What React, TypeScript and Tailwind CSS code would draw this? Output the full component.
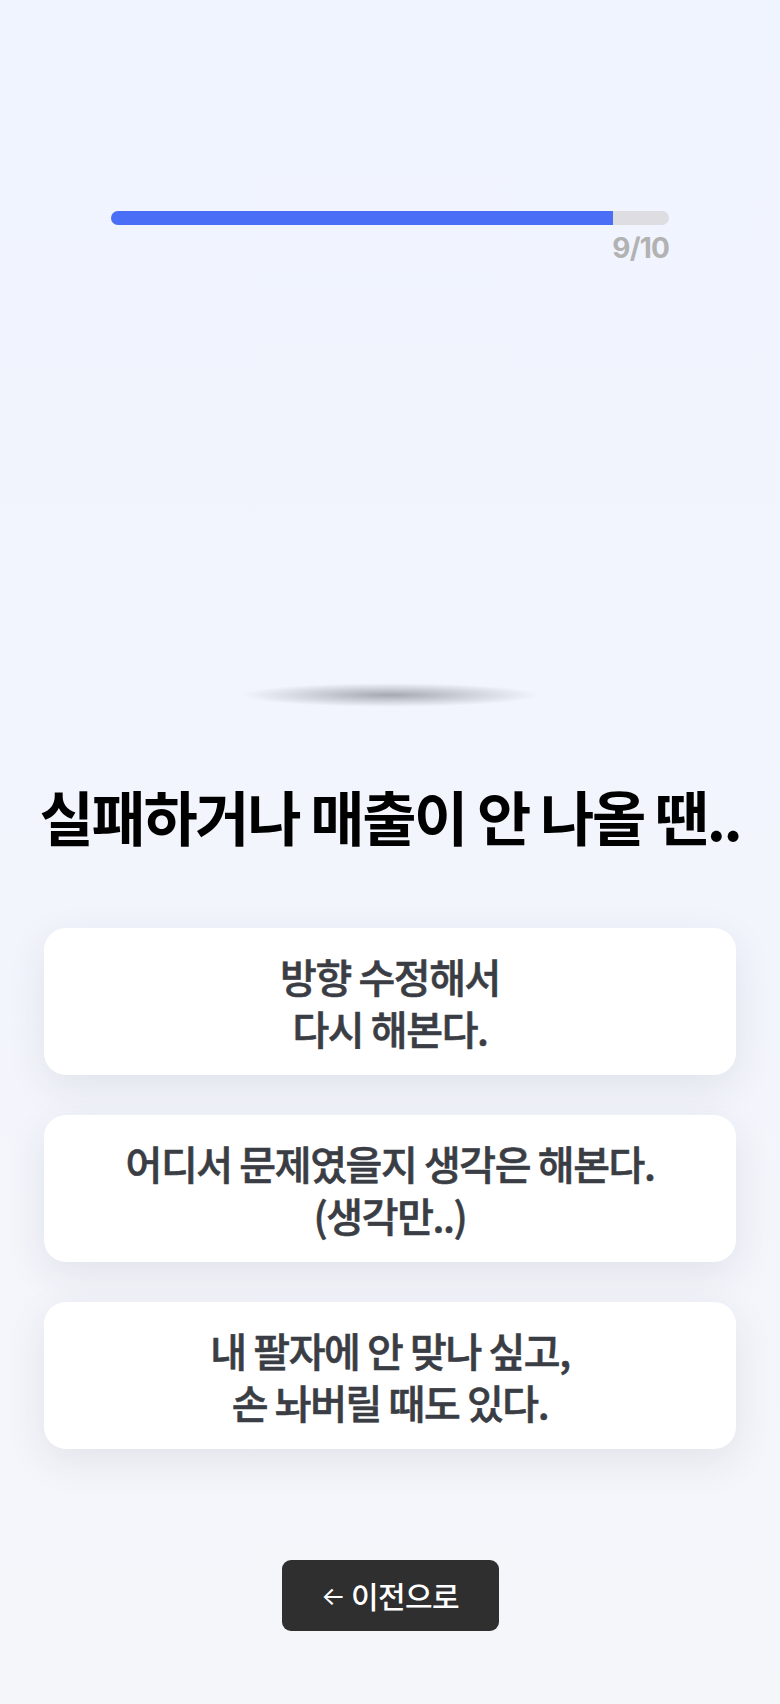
import React from "react";

const options = [
  "방향 수정해서\n다시 해본다.",
  "어디서 문제였을지 생각은 해본다.\n(생각만..)",
  "내 팔자에 안 맞나 싶고,\n손 놔버릴 때도 있다.",
];

export default function App() {
  const step = 9;
  const total = 10;

  return (
    <div
      className="min-h-[1704px] w-full flex flex-col items-center bg-gradient-to-b from-[#f0f4ff] to-[#f5f6fa]"
      style={{ fontFamily: '"Noto Sans CJK KR", "Noto Sans", sans-serif' }}
    >
      {/* progress */}
      <div className="w-[558px] pt-[211px]">
        <div className="h-[14px] w-full rounded-full bg-[#dddde2] overflow-hidden">
          <div
            className="h-full bg-[#4b6ef7]"
            style={{ width: `${(step / total) * 100}%` }}
          />
        </div>
        <div
          className="mt-[7px] text-right text-[28px] leading-[32px] font-bold text-[#b2b2b2] tracking-[-0.03em]"
          style={{ fontFamily: 'Inter, "Noto Sans", sans-serif' }}
        >
          {step}/{total}
        </div>
      </div>

      {/* character shadow */}
      <div className="mt-[419px] h-[24px] w-[300px] bg-[radial-gradient(ellipse_at_center,rgba(115,117,126,0.6)_0%,rgba(115,117,126,0.25)_40%,rgba(115,117,126,0)_70%)]" />

      <h1 className="mt-[76px] text-[59px] leading-[66px] font-bold text-black tracking-[-0.04em] whitespace-nowrap">
        실패하거나 매출이 안 나올 땐..
      </h1>

      <div className="mt-[79px] flex flex-col gap-[40px]">
        {options.map((text, i) => (
          <button
            key={i}
            type="button"
            className="w-[692px] h-[147px] rounded-[22px] bg-white shadow-[0_12px_40px_rgba(40,45,70,0.09)] flex items-center justify-center text-center whitespace-pre-line text-[40px] leading-[52px] font-medium text-[#3a3d44] tracking-[-0.035em] [-webkit-text-stroke:0.6px_#3a3d44]"
          >
            {text}
          </button>
        ))}
      </div>

      <button
        type="button"
        className="mt-[111px] w-[217px] h-[71px] rounded-[9px] bg-[#2f2f2f] text-white text-[30px] font-medium tracking-[-0.02em] flex items-center justify-center gap-[6px]"
      >
        <span className="text-[26px] font-normal" style={{ fontFamily: "Inter, sans-serif" }}>
          ←
        </span>
        <span>이전으로</span>
      </button>
    </div>
  );
}
